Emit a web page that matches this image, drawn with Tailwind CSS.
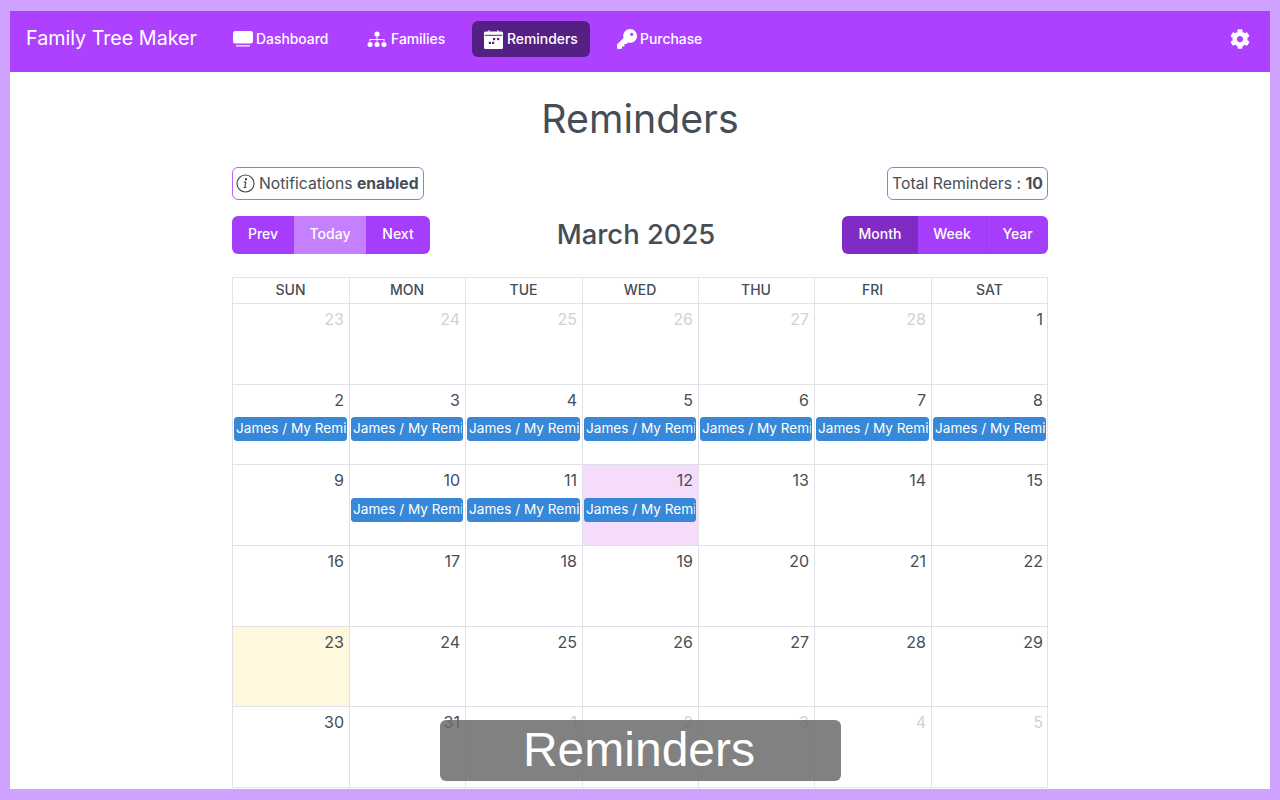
<!DOCTYPE html>
<html lang="en">
<head>
    <meta charset="UTF-8">
    <meta name="viewport" content="width=device-width, initial-scale=1.0">
    <title>Reminders</title>
    <script src="https://cdn.jsdelivr.net/npm/@tailwindcss/browser@4"></script>
</head>
<body class="bg-[#d0a2ff] font-['Inter',sans-serif] text-[#464d57]">
    <div class="h-[800px] overflow-hidden pt-[11px] pl-[10px] pr-[10px]">
        <div class="bg-white h-[778px] overflow-hidden">
            <!-- Top nav -->
            <nav class="h-[61px] bg-[#ad41ff] flex items-center text-white pl-[16px] pr-[20px] pb-[5px]">
                <span class="text-[19.7px] w-[189px]">Family Tree Maker</span>
                <a class="flex items-center gap-[3px] px-[18px] h-[36px] w-[135px] text-[13.9px] font-medium">
                    <svg class="w-[20px] h-[16px]" viewBox="0 0 20 16" fill="white"><rect x="0" y="0" width="20" height="12.5" rx="2.5"/><rect x="3" y="14.2" width="14" height="1.2" rx=".6"/></svg>
                    Dashboard
                </a>
                <a class="flex items-center gap-[4px] px-[17px] h-[36px] w-[118px] text-[13.9px] font-medium">
                    <svg class="w-[20px] h-[17px]" viewBox="0 0 20 17" fill="white"><circle cx="10" cy="3" r="2.6"/><path d="M9.5 5h1v3h7v2.5h-1V9H10.500v1.500h-1V9H3.500v1.500h-1V8h7z"/><circle cx="3" cy="13.500" r="2.500"/><circle cx="10" cy="13.500" r="2.500"/><circle cx="17" cy="13.500" r="2.500"/></svg>
                    Families
                </a>
                <a class="flex items-center gap-[4px] pl-[12px] h-[36px] w-[118px] ml-[4px] rounded-[6px] bg-[#552084] text-[13.9px] font-medium">
                    <svg class="w-[19px] h-[20px]" viewBox="0 0 19 20"><path fill="white" d="M1.500 2.500h3V1h1v1.500h8V1h1v1.500h3A1.500 1.500 0 0 1 19 4v14.500a1.500 1.500 0 0 1-1.500 1.500h-16A1.500 1.500 0 0 1 0 18.500V4a1.500 1.500 0 0 1 1.500-1.500z"/><rect x="0.800" y="5.800" width="17.400" height="1" fill="#552084"/><g fill="#552084"><rect x="9" y="9" width="2.200" height="2.200"/><rect x="13" y="9" width="2.200" height="2.200"/><rect x="4.800" y="12.800" width="2.200" height="2.200"/><rect x="8" y="12.800" width="2.200" height="2.200"/></g></svg>
                    Reminders
                </a>
                <a class="flex items-center gap-[3px] pl-[27px] h-[36px] text-[13.9px] font-medium">
                    <svg class="w-[20px] h-[20px]" viewBox="0 0 512 512" fill="white"><path d="M336 352c97.200 0 176-78.800 176-176S433.200 0 336 0S160 78.800 160 176c0 18.700 2.900 36.800 8.300 53.700L7 391c-4.500 4.500-7 10.600-7 17v80c0 13.300 10.700 24 24 24h80c13.300 0 24-10.700 24-24V448h40c13.300 0 24-10.700 24-24V384h40c6.400 0 12.500-2.500 17-7l33.300-33.300c16.900 5.400 35 8.300 53.700 8.300zM376 96a40 40 0 1 1 0 80 40 40 0 1 1 0-80z"/></svg>
                    Purchase
                </a>
                <svg class="w-[20px] h-[20px] ml-auto" viewBox="0 0 512 512"><path fill="white" d="M487.400 315.700l-42.600-24.600c4.300-23.200 4.300-47 0-70.200l42.600-24.600c4.900-2.800 7.100-8.600 5.500-14-11.100-35.600-30-67.800-54.700-94.600-3.800-4.100-10-5.100-14.800-2.300L380.800 110c-17.900-15.400-38.500-27.300-60.800-35.100V25.800c0-5.600-3.900-10.500-9.400-11.700-36.700-8.200-74.300-7.800-109.200 0-5.500 1.200-9.400 6.100-9.400 11.700V75c-22.200 7.900-42.800 19.800-60.800 35.100L88.700 85.500c-4.900-2.800-11-1.900-14.800 2.300-24.700 26.700-43.600 58.900-54.700 94.600-1.700 5.400.6 11.200 5.500 14L67.300 221c-4.300 23.200-4.300 47 0 70.200l-42.600 24.600c-4.900 2.800-7.100 8.600-5.500 14 11.100 35.600 30 67.800 54.700 94.600 3.800 4.100 10 5.100 14.800 2.300l42.600-24.600c17.900 15.400 38.500 27.300 60.800 35.100v49.200c0 5.600 3.900 10.500 9.400 11.700 36.700 8.200 74.300 7.800 109.200 0 5.500-1.200 9.400-6.100 9.400-11.700v-49.200c22.200-7.900 42.800-19.800 60.800-35.100l42.600 24.600c4.900 2.800 11 1.900 14.800-2.300 24.700-26.700 43.600-58.900 54.700-94.600 1.500-5.500-.7-11.300-5.600-14.100zM256 336c-44.100 0-80-35.900-80-80s35.900-80 80-80 80 35.900 80 80-35.900 80-80 80z"/></svg>
            </nav>

            <div class="w-[816px] ml-[222px]">
                <h1 class="text-[39.3px] leading-[46px] text-center mt-[24px]">Reminders</h1>

                <div class="flex justify-between mt-[25px]">
                    <div class="flex items-center h-[33px] pl-[3px] pr-[4px] gap-[4px] border border-[#b866f0] rounded-[6px] text-[15.7px]">
                        <svg class="w-[19px] h-[19px]" viewBox="0 0 19 19" fill="none" stroke="#464d57" stroke-width="1.200"><circle cx="9.500" cy="9.500" r="8.500"/><path d="M9.800 8.200 8.900 13.300M8.300 8.200h1.500M8 13.500h2" stroke-linecap="round"/><circle cx="10" cy="5.300" r=".6" fill="#464d57"/></svg>
                        <span>Notifications <b class="font-bold">enabled</b></span>
                    </div>
                    <div class="flex items-center h-[33px] px-[4px] border border-[#b866f0] rounded-[6px] text-[15.8px]">
                        <span>Total Reminders : <b class="font-bold">10</b></span>
                    </div>
                </div>

                <div class="flex items-center justify-between mt-[16px] h-[38px]">
                    <div class="flex h-[38px] w-[198px] rounded-[6px] overflow-hidden text-white text-[14px] font-medium">
                        <button class="w-[62px] pb-[4px] bg-[#a63dfb]">Prev</button>
                        <button class="w-[72px] pb-[4px] bg-[#c580ff]">Today</button>
                        <button class="flex-1 pb-[4px] bg-[#a63dfb]">Next</button>
                    </div>
                    <h2 class="text-[27.4px] font-medium">March 2025</h2>
                    <div class="flex h-[38px] w-[206px] rounded-[6px] overflow-hidden text-white text-[14px] font-medium">
                        <button class="w-[76px] pb-[4px] bg-[#7f2bc4]">Month</button>
                        <button class="w-[68px] pb-[4px] bg-[#a63dfb]">Week</button>
                        <button class="flex-1 pb-[4px] bg-[#a63dfb] border-l border-[#a038f2]">Year</button>
                    </div>
                </div>

                <!-- Calendar -->
                <div class="grid grid-cols-[117px_116px_117px_116px_116px_117px_117px] mt-[23px] h-[26px] border-t border-r border-[#e2e4e8] text-[14px] font-medium">
                    <div class="flex items-center justify-center pb-[2px] pr-[1px] border-l border-[#e2e4e8]">SUN</div>
                    <div class="flex items-center justify-center pb-[2px] pr-[1px] border-l border-[#e2e4e8]">MON</div>
                    <div class="flex items-center justify-center pb-[2px] pr-[1px] border-l border-[#e2e4e8]">TUE</div>
                    <div class="flex items-center justify-center pb-[2px] pr-[1px] border-l border-[#e2e4e8]">WED</div>
                    <div class="flex items-center justify-center pb-[2px] pr-[1px] border-l border-[#e2e4e8]">THU</div>
                    <div class="flex items-center justify-center pb-[2px] pr-[1px] border-l border-[#e2e4e8]">FRI</div>
                    <div class="flex items-center justify-center pb-[2px] pr-[1px] border-l border-[#e2e4e8]">SAT</div>
                </div>
                <div id="calendar" class="grid grid-cols-[117px_116px_117px_116px_116px_117px_117px] grid-rows-[81px_80px_81px_81px_80px_81px] border-r border-b border-[#dfe1e6]"></div>
            </div>
        </div>
    </div>

    <!-- Page caption over the calendar -->
    <div class="absolute left-[440px] top-[720px] w-[401px] h-[61px] pr-[3px] pb-[2px] rounded-[6px] bg-[#6b6b6b]/85 flex items-center justify-center text-white text-[48px] font-['Liberation_Sans',sans-serif]">Reminders</div>

    <script>
        const days = [
            [23,1],[24,1],[25,1],[26,1],[27,1],[28,1],[1,0],
            [2,0],[3,0],[4,0],[5,0],[6,0],[7,0],[8,0],
            [9,0],[10,0],[11,0],[12,0],[13,0],[14,0],[15,0],
            [16,0],[17,0],[18,0],[19,0],[20,0],[21,0],[22,0],
            [23,0],[24,0],[25,0],[26,0],[27,0],[28,0],[29,0],
            [30,0],[31,0],[1,1],[2,1],[3,1],[4,1],[5,1]
        ];
        const hasReminder = i => (i >= 7 && i <= 13) || (i >= 15 && i <= 17);

        document.getElementById('calendar').innerHTML = days.map(([num, muted], i) => {
            let bg = '';
            if (i === 17) bg = 'bg-[#f5dcfb]';
            if (i === 28) bg = 'bg-[#fff8dc]';
            const color = muted ? 'text-[#cfd2d6]' : '';
            const gap = i < 14 ? 'mt-[5px]' : 'mt-[6px]';
            const event = hasReminder(i)
                ? `<div class="ml-[1px] mr-[2px] ${gap} h-[24px] leading-[20px] pl-[1px] rounded-[3px] bg-[#3788d8] border border-[#3788d8] text-white text-[13.6px] overflow-hidden whitespace-nowrap">James / My Reminder</div>`
                : '';
            return `<div class="border-l border-t border-[#dfe1e6] overflow-hidden ${bg}">
                <div class="text-right text-[16px] leading-[24px] pr-[5px] pt-[3px] ${color}">${num}</div>${event}
            </div>`;
        }).join('');
    </script>
</body>
</html>
